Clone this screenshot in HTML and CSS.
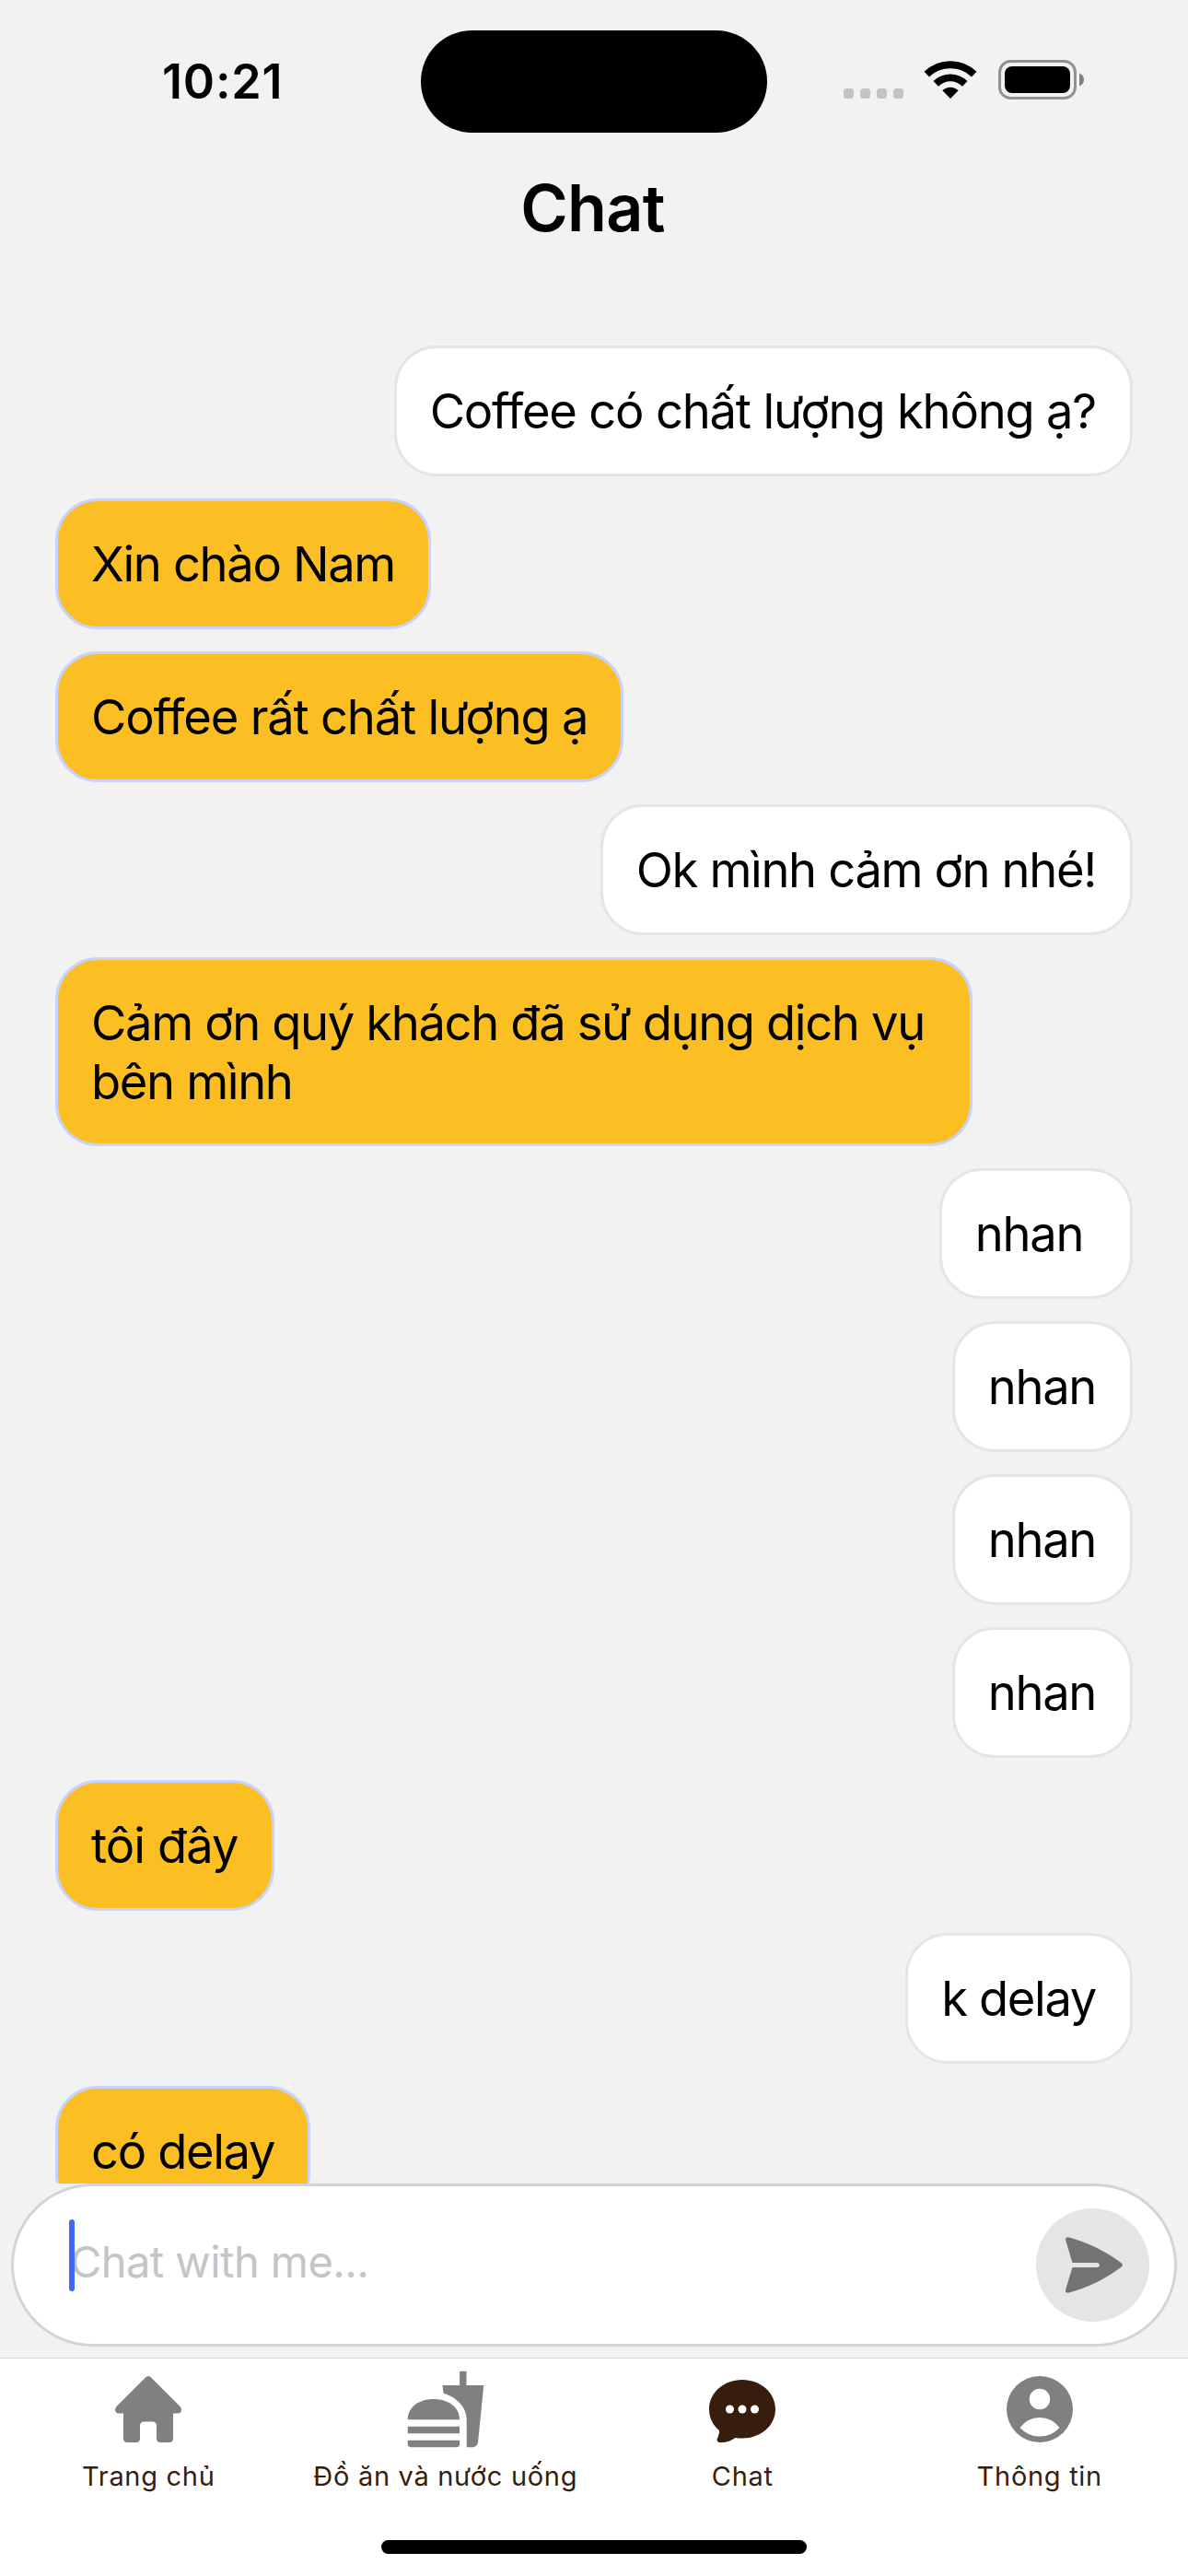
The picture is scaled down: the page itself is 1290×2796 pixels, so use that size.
FILE: index.html
```html
<!DOCTYPE html>
<html lang="vi">
<head>
<meta charset="utf-8">
<title>Chat</title>
<link rel="stylesheet" href="styles.css">
</head>
<body>
<div class="screen">
  <header class="status">
    <div class="status-side"><span class="time">10:21</span></div>
    <div class="island"></div>
    <div class="status-side status-icons">
      <svg class="signal" width="65" height="11" viewBox="0 0 65 11" fill="#c3c3c3"><rect width="11" height="11" rx="3.5"/><rect x="18" width="11" height="11" rx="3.5"/><rect x="36" width="11" height="11" rx="3.5"/><rect x="54" width="11" height="11" rx="3.5"/></svg>
      <svg class="wifi" width="58" height="43" viewBox="0 0 58 43"><path d="M.5 12.800A41 41 0 0 1 57.500 12.800L52 18.500A33 33 0 0 0 6 18.500ZM10.500 23A26.500 26.500 0 0 1 47.500 23L42 28.700A18.500 18.500 0 0 0 16 28.700ZM20.300 33.200A12.500 12.500 0 0 1 37.700 33.200L29 42Z"/></svg>
      <svg class="battery" width="93" height="43" viewBox="0 0 93 43"><rect x="1.500" y="1.500" width="82" height="40" rx="12" fill="none" stroke="#929292" stroke-width="3"/><rect x="7" y="7" width="71" height="29" rx="8"/><path d="M88 14.500C91.500 16 93 18.500 93 21.500S91.500 27 88 28.500Z" fill="#808080"/></svg>
    </div>
  </header>
  <h1 class="title">Chat</h1>
  <main class="messages">
    <div class="bubble mine wide">Coffee có chất lượng không ạ?</div>
    <div class="bubble">Xin chào Nam</div>
    <div class="bubble wide">Coffee rất chất lượng ạ</div>
    <div class="bubble mine">Ok mình cảm ơn nhé!</div>
    <div class="bubble">Cảm ơn quý khách đã sử dụng dịch vụ bên mình</div>
    <div class="bubble mine wide">nhan </div>
    <div class="bubble mine">nhan</div>
    <div class="bubble mine">nhan</div>
    <div class="bubble mine">nhan</div>
    <div class="bubble loose">tôi đây</div>
    <div class="bubble mine">k delay</div>
    <div class="bubble">có delay</div>
  </main>
  <div class="composer">
    <span class="caret"></span>
    <span class="placeholder">Chat with me...</span>
    <span class="send"><svg width="62" height="61" viewBox="0 0 62 61" fill="#737373"><path d="M3 .2C23 5.500 43 15 60.800 28.200Q63 30.500 60.800 32.500C43 46 23 55.500 3 60.700Q-.500 61 0 57.500L7.500 33H34.500Q37 32.500 37 30.500T34.500 28H7.500L0 3Q0 0 3 .2Z"/></svg></span>
  </div>
  <nav class="tabs">
    <div class="tab">
      <svg width="90" height="90" viewBox="-9 -9 90 90" fill="#808080"><path d="M33 1.500Q36-1.500 39 1.500L71 33.500Q73 37 71 39.500Q70 40.500 67.500 40.500H63V67.500Q63 72 58.500 72H49.500Q45 72 45 67.500V54Q45 49.500 40.500 49.500H31.500Q27 49.500 27 54V67.500Q27 72 22.500 72H13.500Q9 72 9 67.500V40.500H4.500Q1 40.500 .300 38Q-.500 35.500 1.500 33Z"/></svg>
      <span>Trang chủ</span>
    </div>
    <div class="tab">
      <svg width="90" height="90" viewBox="0 0 24 24" fill="#808080"><path d="M18.060 23H19.720C20.560 23 21.250 22.350 21.350 21.530L23 5.050H18V1H16.030V5.050H11.060L11.360 7.390C15.200 8.500 18.060 11.500 18.060 14.940ZM1 22V21H16.030V22Q16.030 23 15 23H2Q1 23 1 22ZM16.030 15H1C1 11.300 4.300 9.050 8.500 9.050S16.030 11.300 16.030 15ZM1 17H16V19H1Z"/></svg>
      <span>Đồ ăn và nước uống</span>
    </div>
    <div class="tab">
      <svg width="90" height="90" viewBox="-9 -9 90 90" fill="#371d0d"><path d="M36 4C56 4 72 18 72 36S56 67.500 36 67.500Q32 67.500 28.500 67C24 70.500 17 72.500 12 72C8 71.500 8 69 9.500 66.500Q11.500 62 11 59C4 53.500 0 45 0 36C0 18 16 4 36 4Z"/><g fill="#fff"><circle cx="22.500" cy="36" r="4.500"/><circle cx="36" cy="36" r="4.500"/><circle cx="49.500" cy="36" r="4.500"/></g></svg>
      <span>Chat</span>
    </div>
    <div class="tab">
      <svg width="90" height="90" viewBox="-9 -9 90 90"><circle cx="36" cy="36" r="36" fill="#808080"/><circle cx="36" cy="25" r="11.200" fill="#fff"/><path d="M14.500 56Q23 45 36 45T57.500 56Q49 65.500 36 65.500T14.500 56Z" fill="#fff"/></svg>
      <span>Thông tin</span>
    </div>
  </nav>
  <footer class="home-area"><div class="home-indicator"></div></footer>
</div>
</body>
</html>
```
FILE: styles.css
```css
* { box-sizing: border-box; }
body { margin: 0; background: #f2f2f2; color: #000; font-family: Inter, "Noto Sans", sans-serif; }
.screen { width: 1290px; height: 2796px; display: flex; flex-direction: column; overflow: hidden; }
.status { display: flex; padding-top: 33px; flex: none; }
.island { width: 376px; height: 111px; border-radius: 56px; background: #000; }
.status-side { width: 457px; height: 111px; display: flex; }
.time { margin: 24px 0 0 176px; font-size: 52px; line-height: 63px; font-weight: 600; letter-spacing: 0.8px; }
.status-icons { padding: 32px 0 0 83px; }
.signal { margin-top: 31px; }
.wifi { margin-left: 22px; }
.battery { margin-left: 23px; }
.title { margin: 34px 0 0; height: 96px; padding-right: 3px; text-align: center; font-size: 70px; line-height: 96px; font-weight: 600; letter-spacing: -0.7px; flex: none; }
.messages { margin-top: 101px; height: 1995px; padding: 0 60px; display: flex; flex-direction: column; align-items: flex-start; gap: 24px; overflow: hidden; flex: none; }
.bubble { flex: none; min-height: 142px; max-width: 996px; padding: 37px 36px 35px; border: 3px solid #c7d2fe; border-radius: 46px; background: #fbbf24; font-size: 52.5px; line-height: 63.5px; letter-spacing: -1.35px; white-space: pre-wrap; }
.mine { align-self: flex-end; padding: 37px 37px 35px 36px; background: #fff; border-color: #e5e5e5; }
.wide { letter-spacing: -1.2px; }
.loose { letter-spacing: -0.9px; }
.composer { flex: none; position: relative; margin: 0 12px; height: 177px; border: 3px solid #d4d4d4; border-radius: 89px; background: #fff; display: flex; justify-content: space-between; padding: 24px 27px 0 61px; }
.caret { position: absolute; left: 60px; top: 36px; width: 6px; height: 78px; border-radius: 3px; background: #4169f5; }
.placeholder { margin-top: 30px; font-size: 47px; line-height: 56px; letter-spacing: -0.55px; color: #c5c5c7; }
.send { width: 123px; height: 123px; border-radius: 50%; background: #e5e5e5; display: flex; align-items: center; justify-content: center; padding-left: 2px; }
.tabs { flex: none; margin-top: 12px; height: 151px; border-top: 1px solid #d8d8d8; background: #fff; display: grid; grid-template-columns: repeat(4, 1fr); padding-top: 10px; }
.tab { display: flex; flex-direction: column; align-items: center; color: #371d0d; font-size: 29px; line-height: 36px; letter-spacing: 0.7px; white-space: nowrap; }
.tab span { margin-top: 10px; }
.home-area { flex: none; height: 86px; background: #fff; display: flex; justify-content: center; padding-top: 47px; }
.home-indicator { width: 462px; height: 15px; border-radius: 8px; background: #000; }
```
